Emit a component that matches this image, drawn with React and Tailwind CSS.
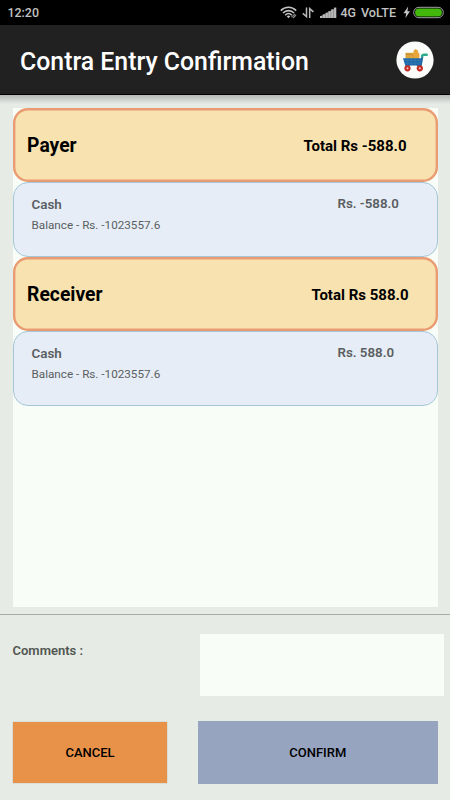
const entries = [
  {
    title: "Payer",
    total: "Total Rs -588.0",
    account: "Cash",
    balance: "Balance - Rs. -1023557.6",
    amount: "Rs. -588.0",
  },
  {
    title: "Receiver",
    total: "Total Rs 588.0",
    account: "Cash",
    balance: "Balance - Rs. -1023557.6",
    amount: "Rs. 588.0",
  },
];

const WifiIcon = () => (
  <svg width="18" height="14" viewBox="0 0 18 14" fill="none" className="absolute left-[280px] top-[6px]">
    <path d="M0.8 4.6C5 0.2 12 0.2 16.2 4.6" stroke="#c4c4c4" strokeWidth="1.6" />
    <path d="M3 7C6 3.8 11 3.8 14 7" stroke="#c4c4c4" strokeWidth="1.6" />
    <path d="M5.2 9.2C7.2 7 9.8 7 11.8 9.2" stroke="#c4c4c4" strokeWidth="1.6" />
    <path d="M8.5 12.2L6.7 10.2C7.7 9.2 9.3 9.2 10.3 10.2Z" fill="#c4c4c4" />
    <path d="M11.5 11.2L15 7.8M13 12L16 9" stroke="#8c8c8c" strokeWidth="1.1" />
  </svg>
);

const DataIcon = () => (
  <svg width="12" height="12" viewBox="0 0 12 12" fill="none" stroke="#b8b8b8" strokeWidth="1.5" className="absolute left-[302px] top-[7px]">
    <path d="M4.5 0.5V9.6L0.8 6.4" />
    <path d="M7.7 11V1.6L11.4 4.9" />
  </svg>
);

const SignalIcon = () => (
  <svg width="17" height="12" viewBox="0 0 17 12" fill="#b8b8b8" className="absolute left-[320px] top-[7px]">
    <path d="M0 11V9.4L16.2 0.6V11Z" fill="#777777" />
    <rect x="0" y="9" width="2.2" height="2" />
    <rect x="2.8" y="7.4" width="2.2" height="3.6" />
    <rect x="5.6" y="5.8" width="2.2" height="5.2" />
    <rect x="8.4" y="4.2" width="2.2" height="6.8" />
    <rect x="11.2" y="2.4" width="2.2" height="8.6" />
    <rect x="14" y="0.6" width="2.2" height="10.4" />
  </svg>
);

const BatteryIcon = () => (
  <svg width="42" height="14" viewBox="0 0 42 14" fill="none" className="absolute left-[403px] top-[6px]">
    <path d="M5.2 0.6L0.5 7.2H3.2L2.4 12L7 5.2H4.4Z" fill="#c8c8c8" />
    <rect x="10.7" y="1.3" width="29.6" height="10.4" rx="5.2" stroke="#b4b4b4" strokeWidth="0.9" />
    <rect x="12.1" y="2.6" width="26.8" height="7.8" rx="3.9" fill="#42b80c" />
  </svg>
);

const CartLogo = () => (
  <svg width="38" height="38" viewBox="0 0 38 38" fill="none">
    <circle cx="19" cy="19" r="18.6" fill="#fafdf9" />
    <rect x="9.5" y="11.8" width="8.4" height="6" fill="#d9a43b" />
    <path d="M15.5 17.8V12.4H17.5V9.8L19.7 8L22.2 9.8V12H23.4V17.8Z" fill="#e6a63a" />
    <path d="M9.7 13.2H15.5L17.5 15.5" stroke="#b9832c" strokeWidth="0.7" />
    <path d="M7 17.2H25.2L27.4 15.6L25.6 25.6H22L20.4 24.6H14L12.5 25.6H9.6Z" fill="#1f68a8" />
    <path d="M8 19.6H25M8.8 22.2H25M11.3 18V24.8M15.2 18V24.4M19 18V24.4M22.8 18V24.8" stroke="#3c88bd" strokeWidth="0.4" />
    <path d="M25.6 17.6L26.4 15" stroke="#286f8c" strokeWidth="1.4" />
    <path d="M26.1 15C26.4 13.9 27.2 13.8 28.2 13.8H30.6" stroke="#28ac89" strokeWidth="2.6" strokeLinecap="round" />
    <circle cx="11.5" cy="27.3" r="3.1" fill="#c42a22" />
    <circle cx="23.8" cy="27.3" r="3.1" fill="#c42a22" />
    <circle cx="11.5" cy="27.3" r="1.1" fill="#e8bdb6" />
    <circle cx="23.8" cy="27.3" r="1.1" fill="#e8bdb6" />
  </svg>
);

const StatusBar = () => (
  <div className="relative h-[25px] bg-black text-[12.4px] font-medium leading-[26px] text-[#c2c2c2]">
    <span className="absolute left-[7.5px] top-0">12:20</span>
    <WifiIcon />
    <DataIcon />
    <SignalIcon />
    <span className="absolute left-[340.5px] top-0 whitespace-nowrap">4G</span>
    <span className="absolute left-[361px] top-0 whitespace-nowrap text-[12.6px]">VoLTE</span>
    <BatteryIcon />
  </div>
);

const Entry = ({ entry }) => (
  <>
    <div className="flex h-[74.5px] items-center rounded-[15px] border-[#e99b74] bg-[#f8e3b0] pl-[14.6px] pt-[2px] font-bold text-black shadow-[inset_0_0_0_2.4px_#e99b74]">
      <span className="flex-1 pt-px text-[19.3px]">{entry.title}</span>
      <span className={`text-[15px] ${entry.total.includes("-") ? "mr-[31px]" : "mr-[29px]"}`}>
        {entry.total}
      </span>
    </div>
    <div className="flex h-[74.5px] rounded-[15px] border border-[#a5c6d6] bg-[#e6edf6] pl-[18px] pt-[11px] text-[#5a5e61]">
      <div className="w-[306px]">
        <p className="pt-[2px] text-[13.4px] font-semibold leading-[18px]">{entry.account}</p>
        <p className="mt-[3px] text-[11.7px] leading-[17px]">{entry.balance}</p>
      </div>
      <p className="text-[13.3px] font-semibold leading-[20px]">{entry.amount}</p>
    </div>
  </>
);

const App = () => {
  return (
    <div className="h-[800px] w-[450px] overflow-hidden bg-[#e6ebe5] font-['Roboto',sans-serif]">
      <StatusBar />
      <header className="flex h-[70px] items-center justify-between border-b border-black bg-[#212121] pl-[20px] pr-[16px]">
        <h1 className="pt-[4px] text-[24.85px] font-medium text-white">Contra Entry Confirmation</h1>
        <CartLogo />
      </header>
      <div className="h-[9px] bg-linear-to-b from-[#b5b8b6] to-[#e6ebe5]" />

      <main className="ml-[12.5px] mt-[3.5px] h-[499.5px] w-[425px] bg-[#f8fdf7]">
        {entries.map((entry) => (
          <Entry key={entry.title} entry={entry} />
        ))}
      </main>

      <div className="mt-[7px] h-px bg-[#a9aca9]" />

      <div className="flex h-[81px] items-start pl-[12.5px] pt-[19px]">
        <label className="w-[187.5px] pt-[7px] text-[13px] font-semibold leading-[20px] text-[#515651]">
          Comments :
        </label>
        <div className="h-[62px] w-[244px] bg-[#f8fdf7]" />
      </div>

      <div className="mt-[25px] flex items-center pl-[13px] text-[13px] font-medium text-black">
        <button className="h-[61px] w-[154px] bg-[#e89149] pt-px shadow-[0_0_1px_#999]">CANCEL</button>
        <button className="ml-[31px] h-[63px] w-[239.5px] bg-[#97a4c0] pt-px">CONFIRM</button>
      </div>
    </div>
  );
};

export default App;
